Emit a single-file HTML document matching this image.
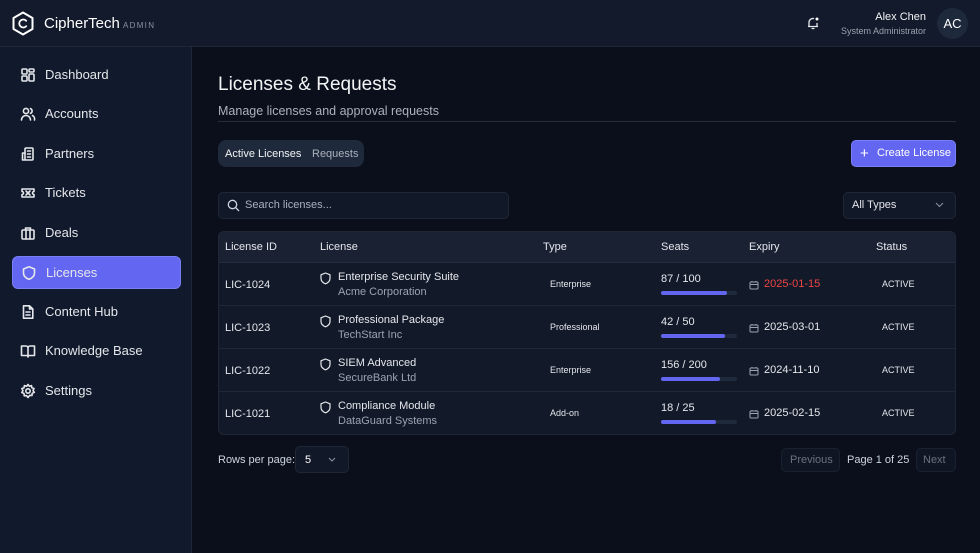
<!DOCTYPE html>
<html><head><meta charset="utf-8"><style>
*{box-sizing:border-box;margin:0;padding:0}
body{width:980px;height:553px;background:#0b0f1b;font-family:"Liberation Sans",sans-serif;color:#e5e7eb;position:relative;overflow:hidden;font-size:12px}
.hdr{position:absolute;left:0;top:0;width:980px;height:47px;background:#121a2b;border-bottom:1px solid #1f2737}
.side{position:absolute;left:0;top:47px;width:192px;height:506px;background:#111a2c;border-right:1px solid #1f2737}
.nav{position:absolute;left:12px;width:169px;height:33px;display:flex;align-items:center;padding-left:8px;font-size:13px;color:#e5e7eb;border-radius:6px}
.nav svg{width:16px;height:16px;margin-right:9px;fill:none;stroke:#e5e7eb;stroke-width:1.6;stroke-linecap:round;stroke-linejoin:round}
.nav.act{background:#6366f1;border:1px solid #7b7ef5}
.abs{position:absolute}
.tbl{position:absolute;left:218px;top:231px;width:738px;height:204px;background:#121a2a;border:1px solid #1f2737;border-radius:6px;overflow:hidden}
.th{position:absolute;top:0;left:0;width:100%;height:31px;background:#192133;border-bottom:1px solid #232b3c}
.th span{position:absolute;top:9px;font-size:11px;color:#e5e7eb}
.row{position:absolute;left:0;width:100%;height:43px;border-bottom:1px solid #1f2737}
.row span{position:absolute}
.id{left:6px;top:16px;font-size:11px}
.sh{left:101px;top:9px}
.ln{left:119px;top:8px;font-size:11px}
.co{left:119px;top:23px;font-size:11px;color:#9ca3af}
.ty{left:331px;top:16px;font-size:9px}
.se{left:442px;top:10px;font-size:11px}
.bar{position:absolute;left:442px;top:28px;width:76px;height:4px;border-radius:2px;background:#1e293b}
.bar i{display:block;height:4px;border-radius:2px;background:#6366f1}
.cal{left:530px;top:16px}
.ex{left:545px;top:15px;font-size:11px}
.st{left:663px;top:16px;font-size:9px}
</style></head><body>
<div class="hdr">
<svg class="abs" style="left:11px;top:11px" width="24" height="25" viewBox="0 0 24 25"><path d="M12 1.5 L21.5 7 V18 L12 23.5 L2.5 18 V7 Z" fill="none" stroke="#fff" stroke-width="2" stroke-linejoin="round"/><path d="M15.2 9.8 A4 4 0 1 0 15.2 15.2" fill="none" stroke="#fff" stroke-width="1.8" stroke-linecap="round"/></svg>
<div class="abs" style="left:44px;top:15px;font-size:15px;color:#fff">CipherTech</div>
<div class="abs" style="left:123px;top:21px;font-size:8px;letter-spacing:1.3px;color:#8b93a3">ADMIN</div>
<svg class="abs" style="left:806px;top:16px" width="14" height="14" viewBox="0 0 14 14" fill="none" stroke="#e5e7eb" stroke-width="1.3"><path d="M3 10.5 V6.5 A4 4 0 0 1 8 2.6 M11 7 V10.5 M2 10.5 H12 M5.5 12.5 H8.5"/><circle cx="11" cy="3" r="1.5" fill="#fff" stroke="none"/></svg>
<div class="abs" style="right:54px;top:11px;font-size:11px;color:#f3f4f6">Alex Chen</div>
<div class="abs" style="right:54px;top:26px;font-size:9px;color:#9ca3af">System Administrator</div>
<div class="abs" style="left:937px;top:8px;width:31px;height:31px;border-radius:50%;background:#1e293b;color:#fff;font-size:13px;text-align:center;line-height:31px">AC</div>
</div>
<div class="side">
<div class="nav" style="top:11px"><svg viewBox="0 0 16 16"><rect x="2" y="2" width="5" height="5" rx="1"/><rect x="9" y="2" width="5" height="3" rx="1"/><rect x="2" y="9" width="5" height="5" rx="1"/><rect x="9" y="7" width="5" height="7" rx="1"/></svg>Dashboard</div>
<div class="nav" style="top:50px"><svg viewBox="0 0 16 16"><circle cx="6" cy="5" r="2.6"/><path d="M1.5 14 A4.5 4.5 0 0 1 10.5 14 M10.5 2.6 A2.6 2.6 0 0 1 10.5 7.4 M12.5 9.5 A4 4 0 0 1 14.5 14"/></svg>Accounts</div>
<div class="nav" style="top:90px"><svg viewBox="0 0 16 16"><rect x="5" y="2" width="8" height="12" rx="1"/><path d="M5 7 H2.5 V14 H5 M7.5 5 H10.5 M7.5 8 H10.5 M7.5 11 H10.5"/></svg>Partners</div>
<div class="nav" style="top:129px"><svg viewBox="0 0 16 16"><path d="M2 4 H14 V6.5 A1.5 1.5 0 0 0 14 9.5 V12 H2 V9.5 A1.5 1.5 0 0 0 2 6.5 Z M6 6 L10 10 M10 6 L6 10"/></svg>Tickets</div>
<div class="nav" style="top:169px"><svg viewBox="0 0 16 16"><rect x="2" y="5" width="12" height="9" rx="1"/><path d="M5.5 5 V3 H10.5 V5 M6 5 V14 M10 5 V14"/></svg>Deals</div>
<div class="nav act" style="top:209px"><svg viewBox="0 0 16 16"><path d="M8 1.8 L13.5 4 V8 C13.5 11 11 13.2 8 14.3 C5 13.2 2.5 11 2.5 8 V4 Z"/></svg>Licenses</div>
<div class="nav" style="top:248px"><svg viewBox="0 0 16 16"><path d="M3.5 1.8 H9.5 L12.8 5 V14.2 H3.5 Z M9.5 1.8 V5 H12.8 M6 8 H10 M6 11 H10"/></svg>Content Hub</div>
<div class="nav" style="top:287px"><svg viewBox="0 0 16 16"><path d="M1.5 3 H6 A2 2 0 0 1 8 5 V14 A1.5 1.5 0 0 0 6.5 12.5 H1.5 Z M14.5 3 H10 A2 2 0 0 0 8 5 V14 A1.5 1.5 0 0 1 9.5 12.5 H14.5 Z"/></svg>Knowledge Base</div>
<div class="nav" style="top:327px"><svg viewBox="0 0 16 16"><circle cx="8" cy="8" r="2.2"/><path d="M8 1.5 L9.3 3.3 L11.5 2.6 L11.8 4.8 L14 5.5 L13 7.5 L14.3 9.3 L12.2 10.3 L12 12.5 L9.8 12.3 L8 14.5 L6.5 12.6 L4.2 12.8 L4 10.5 L1.8 9.5 L3 7.6 L1.8 5.6 L4 4.8 L4.4 2.6 L6.6 3.2 Z"/></svg>Settings</div>
</div>

<div class="abs" style="left:218px;top:74px;font-size:19px;color:#f3f4f6">Licenses &amp; Requests</div>
<div class="abs" style="left:218px;top:104px;font-size:12.5px;color:#aab1bd">Manage licenses and approval requests</div>
<div class="abs" style="left:218px;top:121px;width:738px;height:1px;background:#262e3e"></div>

<div class="abs" style="left:218px;top:140px;width:146px;height:27px;background:#1e293b;border-radius:8px"></div>
<div class="abs" style="left:225px;top:148px;font-size:11px;color:#f3f4f6">Active Licenses</div>
<div class="abs" style="left:312px;top:148px;font-size:11px;color:#aab1bd">Requests</div>

<div class="abs" style="left:851px;top:140px;width:105px;height:27px;background:#6366f1;border-radius:5px;border:1px solid #7b7ef5"></div>
<div class="abs" style="left:860px;top:145px;font-size:15px;color:#fff">+</div>
<div class="abs" style="left:877px;top:147px;font-size:11px;color:#fff">Create License</div>

<div class="abs" style="left:218px;top:192px;width:291px;height:27px;background:#111827;border:1px solid #1f2737;border-radius:5px"></div>
<svg class="abs" style="left:227px;top:199px" width="13" height="13" viewBox="0 0 13 13" fill="none" stroke="#cbd5e1" stroke-width="1.3"><circle cx="5.5" cy="5.5" r="4.2"/><path d="M8.6 8.6 L12 12"/></svg>
<div class="abs" style="left:245px;top:199px;font-size:11px;color:#aab1bd">Search licenses...</div>

<div class="abs" style="left:843px;top:192px;width:113px;height:27px;background:#111827;border:1px solid #1f2737;border-radius:5px"></div>
<div class="abs" style="left:852px;top:199px;font-size:11px;color:#e5e7eb">All Types</div>
<svg class="abs" style="left:935px;top:202px" width="9" height="6" viewBox="0 0 9 6" fill="none" stroke="#8b93a3" stroke-width="1"><path d="M1 1 L4.5 4.5 L8 1"/></svg>

<div class="tbl">
<div class="th"><span style="left:6px">License ID</span><span style="left:101px">License</span><span style="left:324px">Type</span><span style="left:442px">Seats</span><span style="left:530px">Expiry</span><span style="left:657px">Status</span></div>
<div class="row" style="top:31px"><span class="id">LIC-1024</span><span class="sh"><svg width="11" height="13" viewBox="0 0 11 13" fill="none" stroke="#e5e7eb" stroke-width="1.2"><path d="M5.5 1 L10 2.8 V6.5 C10 9 8 10.8 5.5 11.8 C3 10.8 1 9 1 6.5 V2.8 Z"/></svg></span><span class="ln">Enterprise Security Suite</span><span class="co">Acme Corporation</span><span class="ty">Enterprise</span><span class="se">87 / 100</span><div class="bar"><i style="width:66px"></i></div><span class="cal"><svg width="10" height="10" viewBox="0 0 10 10" fill="none" stroke="#9ca3af" stroke-width="1"><rect x="1" y="2" width="8" height="7" rx="1"/><path d="M1 4.5 H9 M3 1 V2.5 M7 1 V2.5"/></svg></span><span class="ex" style="color:#ef4444">2025-01-15</span><span class="st">ACTIVE</span></div>
<div class="row" style="top:74px"><span class="id">LIC-1023</span><span class="sh"><svg width="11" height="13" viewBox="0 0 11 13" fill="none" stroke="#e5e7eb" stroke-width="1.2"><path d="M5.5 1 L10 2.8 V6.5 C10 9 8 10.8 5.5 11.8 C3 10.8 1 9 1 6.5 V2.8 Z"/></svg></span><span class="ln">Professional Package</span><span class="co">TechStart Inc</span><span class="ty">Professional</span><span class="se">42 / 50</span><div class="bar"><i style="width:64px"></i></div><span class="cal"><svg width="10" height="10" viewBox="0 0 10 10" fill="none" stroke="#9ca3af" stroke-width="1"><rect x="1" y="2" width="8" height="7" rx="1"/><path d="M1 4.5 H9 M3 1 V2.5 M7 1 V2.5"/></svg></span><span class="ex">2025-03-01</span><span class="st">ACTIVE</span></div>
<div class="row" style="top:117px"><span class="id">LIC-1022</span><span class="sh"><svg width="11" height="13" viewBox="0 0 11 13" fill="none" stroke="#e5e7eb" stroke-width="1.2"><path d="M5.5 1 L10 2.8 V6.5 C10 9 8 10.8 5.5 11.8 C3 10.8 1 9 1 6.5 V2.8 Z"/></svg></span><span class="ln">SIEM Advanced</span><span class="co">SecureBank Ltd</span><span class="ty">Enterprise</span><span class="se">156 / 200</span><div class="bar"><i style="width:59px"></i></div><span class="cal"><svg width="10" height="10" viewBox="0 0 10 10" fill="none" stroke="#9ca3af" stroke-width="1"><rect x="1" y="2" width="8" height="7" rx="1"/><path d="M1 4.5 H9 M3 1 V2.5 M7 1 V2.5"/></svg></span><span class="ex">2024-11-10</span><span class="st">ACTIVE</span></div>
<div class="row" style="top:160px;border-bottom:none"><span class="id">LIC-1021</span><span class="sh"><svg width="11" height="13" viewBox="0 0 11 13" fill="none" stroke="#e5e7eb" stroke-width="1.2"><path d="M5.5 1 L10 2.8 V6.5 C10 9 8 10.8 5.5 11.8 C3 10.8 1 9 1 6.5 V2.8 Z"/></svg></span><span class="ln">Compliance Module</span><span class="co">DataGuard Systems</span><span class="ty">Add-on</span><span class="se">18 / 25</span><div class="bar"><i style="width:55px"></i></div><span class="cal"><svg width="10" height="10" viewBox="0 0 10 10" fill="none" stroke="#9ca3af" stroke-width="1"><rect x="1" y="2" width="8" height="7" rx="1"/><path d="M1 4.5 H9 M3 1 V2.5 M7 1 V2.5"/></svg></span><span class="ex">2025-02-15</span><span class="st">ACTIVE</span></div>
</div>

<div class="abs" style="left:218px;top:454px;font-size:11px;color:#cbd5e1">Rows per page:</div>
<div class="abs" style="left:295px;top:446px;width:54px;height:27px;background:#111827;border:1px solid #1f2737;border-radius:5px"></div>
<div class="abs" style="left:305px;top:454px;font-size:11px;color:#fff">5</div>
<svg class="abs" style="left:328px;top:457px" width="8" height="5" viewBox="0 0 8 5" fill="none" stroke="#8b93a3" stroke-width="1"><path d="M1 1 L4 4 L7 1"/></svg>
<div class="abs" style="left:781px;top:448px;width:59px;height:24px;background:#0f1522;border:1px solid #1a2130;border-radius:5px"></div>
<div class="abs" style="left:790px;top:454px;font-size:11px;color:#6b7280">Previous</div>
<div class="abs" style="left:847px;top:454px;font-size:11px;color:#cbd5e1">Page 1 of 25</div>
<div class="abs" style="left:916px;top:448px;width:40px;height:24px;background:#0f1522;border:1px solid #1a2130;border-radius:5px"></div>
<div class="abs" style="left:923px;top:454px;font-size:11px;color:#6b7280">Next</div>
</body></html>
